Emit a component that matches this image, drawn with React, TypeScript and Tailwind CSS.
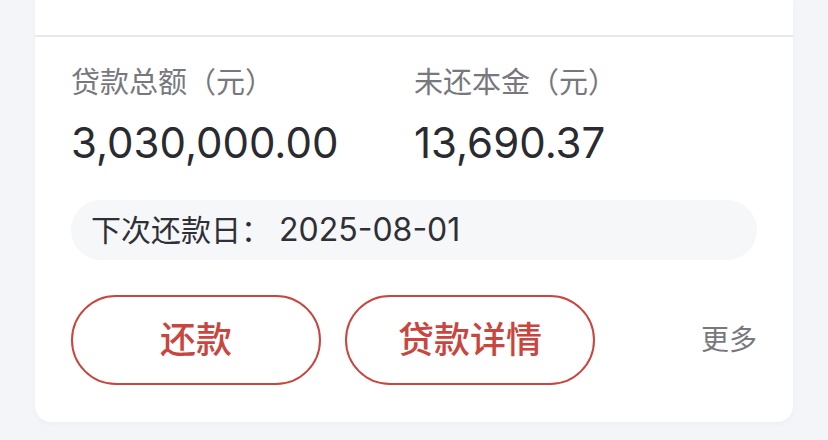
import React from 'react'

const FONT = { fontFamily: 'Inter, "Noto Sans CJK SC", "Noto Sans", sans-serif' }

export default function App() {
  return (
    <div className="h-[440px] w-[828px] overflow-hidden bg-[#f4f5f8]" style={FONT}>
      <div className="mx-[35px] w-[758px] rounded-b-[16px] bg-white shadow-[0_2px_6px_rgba(0,0,0,0.03)]">
        <div className="h-[35px]" />
        <div className="border-t-2 border-[#e8e9ec] px-[36px] pb-[37px] pt-[28px]">
          <div className="grid grid-cols-2">
            <Stat label="贷款总额（元）" value="3,030,000.00" />
            <Stat label="未还本金（元）" value="13,690.37" />
          </div>

          <div className="mt-[33px] flex h-[60px] items-center rounded-full bg-[#f6f7f9] pl-[20px] text-[30px] text-[#2f3036]">
            下次还款日：<span className="ml-[8px] text-[32px]">2025-08-01</span>
          </div>

          <div className="mt-[35px] flex items-center">
            <ActionButton text="还款" />
            <ActionButton text="贷款详情" className="ml-[24px]" />
            <span className="ml-auto text-[28px] text-[#77787d]">更多</span>
          </div>
        </div>
      </div>
    </div>
  )
}

function Stat({ label, value }: { label: string; value: string }) {
  return (
    <div>
      <p className="text-[29px] leading-[36px] text-[#77787d]">{label}</p>
      <p className="mt-[18px] text-[42px] leading-[48px] text-[#2a2b31]">{value}</p>
    </div>
  )
}

function ActionButton({ text, className = '' }: { text: string; className?: string }) {
  return (
    <button
      className={`flex h-[90px] w-[250px] items-center justify-center rounded-full border-2 border-[#c9463f] text-[36px] font-medium text-[#c9463f] ${className}`}
    >
      {text}
    </button>
  )
}
